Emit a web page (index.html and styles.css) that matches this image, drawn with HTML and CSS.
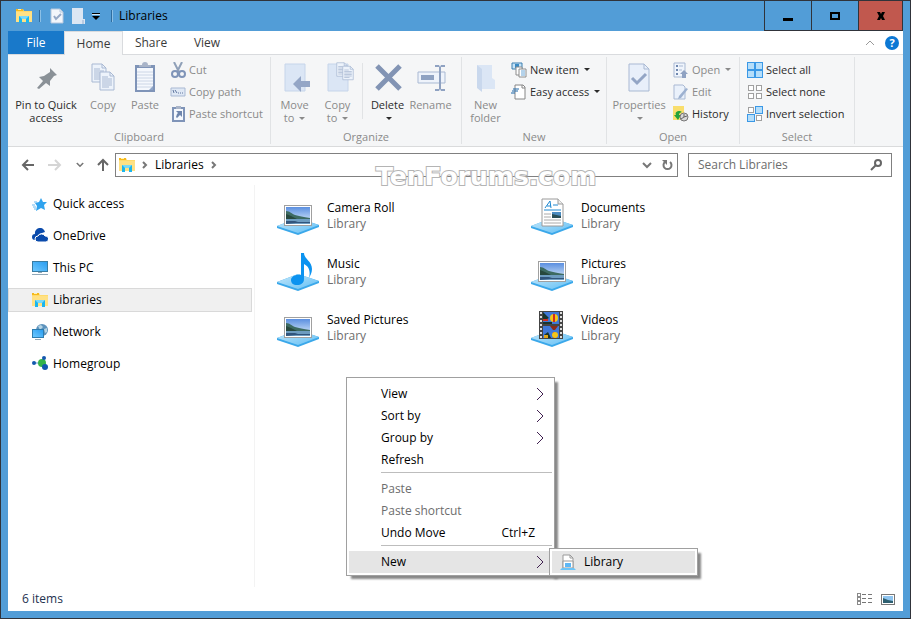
FILE: index.html
```html
<!DOCTYPE html>
<html lang="en">
<head>
    <meta charset="UTF-8">
    <meta name="viewport" content="width=device-width, initial-scale=1.0">
    <title>Libraries</title>
    <link rel="stylesheet" href="styles.css">
</head>
<body>
    <!-- shapes used more than once -->
    <svg class="defs" aria-hidden="true">
        <linearGradient id="baseFill" x1="0" y1="0" x2="1" y2="1">
            <stop offset="0" stop-color="#c5e8fa"/>
            <stop offset="1" stop-color="#62bff5"/>
        </linearGradient>
        <linearGradient id="screenFill" x1="0" y1="1" x2="1" y2="0">
            <stop offset="0" stop-color="#6cc8ff"/>
            <stop offset="1" stop-color="#2a9df0"/>
        </linearGradient>
        <linearGradient id="skyFill" x1="0" y1="0" x2="0" y2="1">
            <stop offset="0" stop-color="#5b8fe0"/>
            <stop offset="1" stop-color="#e4f3fc"/>
        </linearGradient>
        <symbol id="folder" viewBox="0 0 16 16">
            <path d="M0 1h7l1 2h8v11H0z" fill="#ffda6b"/>
            <path d="M0 1h7v2H0z" fill="#f6b91c"/>
            <path d="M2 1h3v1H2z" fill="#fff3b8"/>
            <path d="M0 4h16v10H0z" fill="#ffe184"/>
            <path d="M3 15V8h10v7h-3v-4H6v4z" fill="#1bb5ee"/>
            <path d="M3 8h10l-3 3H6z" fill="#7ad9f8"/>
        </symbol>
        <symbol id="base" viewBox="0 0 42 48">
            <path d="M0 38l21-8 21 7v2l-21 8-21-7z" fill="#3ba8ea"/>
            <path d="M0 38l21-8 21 7-21 8z" fill="url(#baseFill)"/>
        </symbol>
        <symbol id="photo" viewBox="0 0 28 21">
            <path d="M0 0h28v21H0z" fill="#a0a0a0"/>
            <path d="M1 1h26v19H1z" fill="#fff"/>
            <path d="M2 2h24v17H2z" fill="url(#skyFill)"/>
            <path d="M2 6c4 0 6 3 9 4 4 1 8 2 15 3v1H2z" fill="#3d6b62"/>
            <path d="M2 9l5 2 6 3H2z" fill="#27483d"/>
            <path d="M2 14h24v5H2z" fill="#6d9cc0"/>
            <path d="M2 16h9l3 1h12v1H12l-10 1z" fill="#31557c"/>
        </symbol>
        <symbol id="doc" viewBox="0 0 16 20">
            <path d="M1 1h10l4 4v14H1z" fill="#edf3fb" stroke="#a9b9d3"/>
            <path d="M11 1v4h4M3 6h6M3 8h10M3 10h10M3 12h10M3 14h10M3 16h7" fill="none" stroke="#a9b9d3"/>
        </symbol>
        <symbol id="submenu" viewBox="0 0 8 14">
            <path d="M1 1l6 6-6 6" fill="none" stroke="#402050"/>
        </symbol>
        <symbol id="chev" viewBox="0 0 6 8">
            <path d="M1 1l3 3-3 3" fill="none" stroke="#777" stroke-width="2"/>
        </symbol>
        <symbol id="down" viewBox="0 0 10 7">
            <path d="M1 1l4 4 4-4" fill="none" stroke="#777" stroke-width="2"/>
        </symbol>
    </svg>

    <div class="window">
        <header class="titlebar">
            <svg class="i16" viewBox="0 0 16 16"><use href="#folder"/></svg>
            <span class="divider"></span>
            <button class="quick" aria-label="Properties">
                <svg width="14" height="16" viewBox="0 0 14 16"><path d="M1 1h9l3 3v11H1z" fill="#f3f6fb" stroke="#b6c8de"/><path d="M10 1v3h3" fill="none" stroke="#b6c8de"/><path d="M4 8l2 3 5-5" fill="none" stroke="#96a9c6" stroke-width="2"/></svg>
            </button>
            <button class="quick" aria-label="New folder">
                <svg width="14" height="16" viewBox="0 0 14 16"><path d="M1 0h11v11h2v5H1z" fill="#dce6f3"/><path d="M11 12h2v4h-2z" fill="#b9cbe2"/></svg>
            </button>
            <button class="quick" aria-label="Customize Quick Access Toolbar">
                <svg width="8" height="7" viewBox="0 0 8 7"><path d="M0 0h8v1H0zM0 3h8L4 7z" fill="#000"/><path d="M0 1h8v1H0z" fill="#d4e7f6"/></svg>
            </button>
            <span class="divider"></span>
            <h1>Libraries</h1>
            <div class="caption">
                <button aria-label="Minimize"><svg width="12" height="12" viewBox="0 0 12 12"><path d="M1 8h10v3H1z"/></svg></button>
                <button aria-label="Maximize"><svg width="12" height="12" viewBox="0 0 12 12"><path d="M2 3h8v6H2z" fill="none" stroke="#000" stroke-width="2"/></svg></button>
                <button class="close" aria-label="Close"><svg width="12" height="12" viewBox="0 0 12 12"><path d="M2 2h3l1 2 1-2h3L8 6l2 4H7L6 8l-1 2H2l2-4z"/></svg></button>
            </div>
        </header>

        <div class="client">
            <nav class="tabs">
                <button class="tab file">File</button>
                <button class="tab home">Home</button>
                <button class="tab">Share</button>
                <button class="tab">View</button>
                <div class="tabs-right">
                    <button aria-label="Minimize the Ribbon"><svg width="10" height="6" viewBox="0 0 10 6"><path d="M1 5l4-4 4 4" fill="none" stroke="#9a9a9a"/></svg></button>
                    <button class="help" aria-label="Help">?</button>
                </div>
            </nav>

            <div class="ribbon">
                <section class="group clipboard">
                    <div class="tools">
                        <button class="big on wide">
                            <svg width="32" height="32" viewBox="0 0 32 32"><path d="M20 6l7 7-3 1-4 5v5l-4-3-7 6-2-1 6-7-4-4 5-1 6-4z" fill="#8a9197"/></svg>
                            <span>Pin to Quick access</span>
                        </button>
                        <button class="big narrow" disabled>
                            <svg width="32" height="32" viewBox="0 0 32 32"><use href="#doc" x="4" y="1" width="16" height="20"/><use href="#doc" x="12" y="9" width="16" height="20"/></svg>
                            <span>Copy</span>
                        </button>
                        <button class="big" disabled>
                            <svg width="32" height="32" viewBox="0 0 32 32"><path d="M6 3h20v27H6z" fill="#7f94b8"/><path d="M8 6h16v22H8z" fill="#f5f8fd"/><path d="M10 5h12V3h-3a3 3 0 0 0-6 0h-3z" fill="#a9b4c8"/><path d="M8 10h16M8 13h16M8 16h16M8 19h16M8 22h16M8 25h16" stroke="#ccd6e6"/><path d="M20 28l4-4v4z" fill="#8fa5c8"/></svg>
                            <span>Paste</span>
                        </button>
                        <div class="smalls">
                            <button class="small" disabled>
                                <svg class="i16" viewBox="0 0 16 16"><path d="M4 0l5 10M12 0L7 10" fill="none" stroke="#8fa0b8" stroke-width="2"/><circle cx="5" cy="12" r="3" fill="none" stroke="#7f94b8" stroke-width="2"/><circle cx="12" cy="12" r="3" fill="none" stroke="#7f94b8" stroke-width="2"/></svg>
                                Cut
                            </button>
                            <button class="small" disabled>
                                <svg class="i16" viewBox="0 0 16 16"><path d="M1 4h14v8H1z" fill="#dfe8f5" stroke="#a9b9d3"/><path d="M3 6l1 3M5 6l2 3M8 9h1M10 9h1M12 9h1" fill="none" stroke="#60779f"/></svg>
                                Copy path
                            </button>
                            <button class="small" disabled>
                                <svg class="i16" viewBox="0 0 16 16"><path d="M2 1h13v15H2z" fill="#7f94b8"/><path d="M4 3h9v11H4z" fill="#f5f8fd"/><path d="M6 0h5v3H6z" fill="#a9b4c8"/><path d="M6 5h6v6l-2-2-3 3-1-1 1-3 1-1z" fill="#6f86ad"/></svg>
                                Paste shortcut
                            </button>
                        </div>
                    </div>
                    <h2>Clipboard</h2>
                </section>

                <section class="group organize">
                    <div class="tools">
                        <button class="big" disabled>
                            <svg width="32" height="32" viewBox="0 0 32 32"><path d="M6 2h20v27H6z" fill="#dbe6f5" stroke="#c6d5ea"/><path d="M14 22l8-8v5h9v6h-9v5z" fill="#94a6c6"/></svg>
                            <span>Move<br>to <i class="caret"></i></span>
                        </button>
                        <button class="big" disabled>
                            <svg width="32" height="32" viewBox="0 0 32 32"><path d="M6 2h20v27H6z" fill="#dbe6f5" stroke="#c6d5ea"/><use href="#doc" x="14" y="0" width="12" height="15"/><use href="#doc" x="20" y="3" width="12" height="16"/></svg>
                            <span>Copy<br>to <i class="caret"></i></span>
                        </button>
                        <span class="line"></span>
                        <button class="big on">
                            <svg width="32" height="32" viewBox="0 0 32 32"><path d="M5 4l23 23M28 4L5 27" stroke="#8294b4" stroke-width="5"/></svg>
                            <span>Delete<br><i class="caret"></i></span>
                        </button>
                        <button class="big" disabled>
                            <svg width="32" height="32" viewBox="0 0 32 32"><path d="M3 10h27v11H3z" fill="#eef3fb" stroke="#a9b9d3"/><path d="M6 13h13v5H6z" fill="#8fa2c2"/><path d="M20 3h4l1 2 1-2h4v2h-4v22h4v2h-4l-1-2-1 2h-4v-2h4V5h-4z" fill="#8fa2c2"/></svg>
                            <span>Rename</span>
                        </button>
                    </div>
                    <h2>Organize</h2>
                </section>

                <section class="group new">
                    <div class="tools">
                        <button class="big" disabled>
                            <svg width="32" height="32" viewBox="0 0 32 32"><path d="M7 3h15v13l3 2v9H10z" fill="#dbe6f5"/><path d="M7 3l5 4v23l-5-4z" fill="#c9d8ed"/></svg>
                            <span>New folder</span>
                        </button>
                        <div class="smalls">
                            <button class="small on">
                                <svg class="i16" viewBox="0 0 16 16"><path d="M1 1h10v6H1z" fill="#c8e4f8" stroke="#3a7fb0"/><path d="M4 2h4v4H4z" fill="#3a8ac4"/><path d="M5 5h6v8H5z" fill="#fff" stroke="#8c8c8c"/><path d="M8 7h7v8H8z" fill="#fff" stroke="#8c8c8c"/><path d="M10 9h4M10 11h4M10 13h4" stroke="#6aa6d6"/></svg>
                                New item <i class="caret"></i>
                            </button>
                            <button class="small on">
                                <svg class="i16" viewBox="0 0 16 16"><path d="M4 1h8l2 2v12H4z" fill="#fff" stroke="#868686"/><path d="M11 1v3h3" fill="none" stroke="#868686"/><path d="M2 5h6M1 7h6M0 9h4" stroke="#1c66a8"/></svg>
                                Easy access <i class="caret"></i>
                            </button>
                        </div>
                    </div>
                    <h2>New</h2>
                </section>

                <section class="group open">
                    <div class="tools">
                        <button class="big wide" disabled>
                            <svg width="32" height="32" viewBox="0 0 32 32"><path d="M6 2h15l5 5v22H6z" fill="#e8effa" stroke="#a9b9d3"/><path d="M21 2v5h5" fill="none" stroke="#a9b9d3"/><path d="M9 16l5 5 9-9" fill="none" stroke="#93a5c5" stroke-width="3"/></svg>
                            <span>Properties<br><i class="caret"></i></span>
                        </button>
                        <div class="smalls">
                            <button class="small" disabled>
                                <svg class="i16" viewBox="0 0 16 16"><path d="M1 1h11v14H1z" fill="#f0f5fc" stroke="#a9b9d3"/><path d="M3 3h2v2H3zM3 7h2v2H3zM3 11h2v2H3z" fill="#7088b0"/><path d="M6 4h4M6 8h3" stroke="#a9b9d3"/><path d="M11 8l4 4h-2v4h-4v-4H7z" fill="#8fa2c2"/></svg>
                                Open <i class="caret"></i>
                            </button>
                            <button class="small" disabled>
                                <svg class="i16" viewBox="0 0 16 16"><path d="M1 1h9l2 2v12H1z" fill="#eaf1fb" stroke="#a9b9d3"/><path d="M13 4l2 1-7 9-3 1 1-3z" fill="#9db1d0"/></svg>
                                Edit
                            </button>
                            <button class="small on">
                                <svg class="i16" viewBox="0 0 16 16"><path d="M0 0h11v14H0z" fill="#f9de6c"/><path d="M7 5C3 5 2 7 3 9L1 9l4 5 3-5H6c0-2 1-2 3-3z" fill="#26a33a"/><circle cx="11" cy="11" r="4" fill="#d8d8d8" stroke="#777"/><path d="M11 8v3l3-1M8 13l3-2" fill="none" stroke="#666"/></svg>
                                History
                            </button>
                        </div>
                    </div>
                    <h2>Open</h2>
                </section>

                <section class="group select">
                    <div class="tools">
                        <div class="smalls">
                            <button class="small on">
                                <svg class="i16" viewBox="0 0 16 16"><path d="M0 0h16v16H0z" fill="#3a98e6"/><path d="M1 1h6v6H1zM9 1h6v6H9zM1 9h6v6H1zM9 9h6v6H9z" fill="#b5defa"/></svg>
                                Select all
                            </button>
                            <button class="small on">
                                <svg class="i16" viewBox="0 0 16 16"><path d="M1 1h6v6H1zM9 1h6v6H9zM1 9h6v6H1zM9 9h6v6H9z" fill="#a0a0a0"/><path d="M2 2h4v4H2zM10 2h4v4h-4zM2 10h4v4H2zM10 10h4v4h-4z" fill="#fff"/></svg>
                                Select none
                            </button>
                            <button class="small on">
                                <svg class="i16" viewBox="0 0 16 16"><path d="M1 1h6v6H1zM9 9h6v6H9z" fill="#a0a0a0"/><path d="M2 2h4v4H2zM10 10h4v4h-4z" fill="#fff"/><path d="M8 0h8v8H8zM0 8h8v8H0z" fill="#3a98e6"/><path d="M9 1h6v6H9zM1 9h6v6H1z" fill="#b5defa"/></svg>
                                Invert selection
                            </button>
                        </div>
                    </div>
                    <h2>Select</h2>
                </section>
            </div>

            <div class="navbar">
                <div class="arrows">
                    <button aria-label="Back"><svg width="14" height="12" viewBox="0 0 14 12"><path d="M13 6H2M7 1L2 6l5 5" fill="none" stroke="#666" stroke-width="2"/></svg></button>
                    <button aria-label="Forward" disabled><svg width="14" height="12" viewBox="0 0 14 12"><path d="M0 6h11M7 1l5 5-5 5" fill="none" stroke="#d5d5d5" stroke-width="2"/></svg></button>
                    <button aria-label="Recent locations"><svg width="8" height="6" viewBox="0 0 10 7"><use href="#down"/></svg></button>
                    <button aria-label="Up"><svg width="12" height="14" viewBox="0 0 12 14"><path d="M6 13V2M1 7l5-5 5 5" fill="none" stroke="#666" stroke-width="2"/></svg></button>
                </div>
                <div class="address">
                    <svg class="i16" viewBox="0 0 16 16"><use href="#folder"/></svg>
                    <svg width="6" height="8"><use href="#chev"/></svg>
                    <a href="#">Libraries</a>
                    <svg width="6" height="8"><use href="#chev"/></svg>
                    <div class="address-end">
                        <button aria-label="Previous locations"><svg width="10" height="7"><use href="#down"/></svg></button>
                        <button aria-label="Refresh"><svg width="12" height="12" viewBox="0 0 12 12"><path d="M9 3a4 4 0 1 1-5 0" fill="none" stroke="#777" stroke-width="2"/><path d="M1 1h5v5z" fill="#777"/></svg></button>
                    </div>
                    <span class="watermark">TenForums.com</span>
                </div>
                <form class="search">
                    <input type="search" placeholder="Search Libraries" aria-label="Search Libraries">
                    <svg width="12" height="12" viewBox="0 0 12 12"><circle cx="8" cy="4" r="3" fill="none" stroke="#666" stroke-width="2"/><path d="M1 11l5-5" stroke="#666" stroke-width="2"/></svg>
                </form>
            </div>

            <div class="content">
                <nav class="sidebar">
                    <a href="#"><svg class="i16" viewBox="0 0 16 16"><path d="M9 2l2 4h4l-3 3 1 5-4-2-5 3 1-5-2-3 4-1z" fill="#30a3ee"/><path d="M2 6h3M0 9h3M1 11h3M2 13h2" stroke="#6cb9ef"/></svg>Quick access</a>
                    <a href="#"><svg class="i16" viewBox="0 0 16 16"><path d="M3 12a3 3 0 0 1 0-6 5 5 0 0 1 10-2L7 6z" fill="#0a4aab"/><path d="M6 14a3 3 0 0 1 0-6 4 4 0 0 1 7 0 3 3 0 0 1 1 6z" fill="#0a4aab" stroke="#fff"/></svg>OneDrive</a>
                    <a href="#"><svg class="i16" viewBox="0 0 16 16"><path d="M0 1h16v11H0z" fill="#397da3"/><path d="M1 2h14v9H1z" fill="url(#screenFill)"/><path d="M6 12h4v1H6zM0 14h16v1H0z" fill="#91a8b8"/></svg>This PC</a>
                    <a href="#" class="current"><svg class="i16" viewBox="0 0 16 16"><use href="#folder"/></svg>Libraries</a>
                    <a href="#"><svg class="i16" viewBox="0 0 16 16"><circle cx="10" cy="6" r="6" fill="#5d93bd"/><path d="M6 2l3-1 2 2-3 3zM12 5l3-1v4l-2 1z" fill="#b5d4e4"/><path d="M0 5h12v9H0z" fill="#2d7caf"/><path d="M1 6h10v7H1z" fill="url(#screenFill)"/><path d="M3 15h6v1H3z" fill="#91a8b8"/></svg>Network</a>
                    <a href="#"><svg class="i16" viewBox="0 0 16 16"><path d="M3 7h8l1-5M10 7l3 4" fill="none" stroke="#579bc8"/><circle cx="10" cy="7" r="4" fill="#35b44a"/><circle cx="2" cy="7" r="2" fill="#1358ae"/><circle cx="12" cy="2" r="2" fill="#1358ae"/><circle cx="13" cy="11" r="3" fill="#1358ae"/></svg>Homegroup</a>
                </nav>

                <main class="files">
                    <a href="#" class="item">
                        <svg width="42" height="48" viewBox="0 0 42 48"><use href="#base"/><use href="#photo" x="7" y="17" width="28" height="21"/></svg>
                        <span>Camera Roll<small>Library</small></span>
                    </a>
                    <a href="#" class="item">
                        <svg width="42" height="48" viewBox="0 0 42 48"><use href="#base"/><path d="M11 11h16l5 5v22H11z" fill="#fff" stroke="#9a9a9a"/><path d="M27 11v5h5" fill="#eee" stroke="#9a9a9a"/><path d="M14 20l5-7 1 7M16 18h4M22 17h5M13 22h17" fill="none" stroke="#1e88d0"/><path d="M13 26h7M13 29h7M13 32h17M13 35h17" stroke="#aaa"/><path d="M21 24h9v6h-9z" fill="#4b8bc0"/><path d="M21 26l9 2v2h-9z" fill="#294e55"/></svg>
                        <span>Documents<small>Library</small></span>
                    </a>
                    <a href="#" class="item">
                        <svg width="42" height="48" viewBox="0 0 42 48"><use href="#base"/><path d="M24 9h3c0 6 8 8 8 16 0 4-2 7-3 9 2-8-1-12-5-14v15c0 4-3 6-7 6s-6-2-6-5 4-6 10-5z" fill="#0c93f0"/></svg>
                        <span>Music<small>Library</small></span>
                    </a>
                    <a href="#" class="item">
                        <svg width="42" height="48" viewBox="0 0 42 48"><use href="#base"/><use href="#photo" x="7" y="17" width="28" height="21"/></svg>
                        <span>Pictures<small>Library</small></span>
                    </a>
                    <a href="#" class="item">
                        <svg width="42" height="48" viewBox="0 0 42 48"><use href="#base"/><use href="#photo" x="7" y="17" width="28" height="21"/></svg>
                        <span>Saved Pictures<small>Library</small></span>
                    </a>
                    <a href="#" class="item">
                        <svg width="42" height="48" viewBox="0 0 42 48"><use href="#base"/><path d="M8 11h24v28H8z" fill="#444"/><path d="M10 12v27M30 12v27" stroke="#ddd" stroke-width="2" stroke-dasharray="2 2"/><path d="M12 12h16v12H12zM12 26h16v12H12z" fill="#3f78d8"/><path d="M12 12l6 6-6 3zM12 22h9v2h-9zM13 35l4-3 3 6h-7z" fill="#19352c"/><circle cx="23" cy="18" r="4" fill="#f5c518"/><path d="M22 14h2v8h-2zM12 19h5v2h-5zM22 32h2v6h-2z" fill="#d22d20"/><path d="M19 26h8l-3 4h-2z" fill="#8a2a18"/><circle cx="24" cy="35" r="3" fill="#f5c518"/><path d="M13 35h4v3h-4z" fill="#e0a516"/></svg>
                        <span>Videos<small>Library</small></span>
                    </a>
                </main>
            </div>

            <footer class="status">
                <span>6 items</span>
                <div class="views">
                    <button aria-label="Details"><svg width="16" height="12" viewBox="0 0 16 12"><path d="M0 0h4v12H0z" fill="#8a8a8a"/><path d="M1 1h2v2H1zM1 5h2v2H1zM1 9h2v2H1z" fill="#fff"/><path d="M5 1h4v1H5zM5 5h4v1H5zM5 9h4v1H5zM11 1h4v1h-4zM11 5h4v1h-4zM11 9h4v1h-4z" fill="#777"/></svg></button>
                    <button aria-label="Large icons"><svg width="14" height="11" viewBox="0 0 14 11"><path d="M0 0h14v11H0z" fill="#777"/><path d="M1 1h12v9H1z" fill="#fff"/><path d="M2 2h10v7H2z" fill="#8fc5f0"/><path d="M2 4l5 2 5 1v2H2z" fill="#2d5f70"/></svg></button>
                </div>
            </footer>
        </div>
    </div>

    <div class="menu context">
        <button>View <svg width="8" height="14"><use href="#submenu"/></svg></button>
        <button>Sort by <svg width="8" height="14"><use href="#submenu"/></svg></button>
        <button>Group by <svg width="8" height="14"><use href="#submenu"/></svg></button>
        <button>Refresh</button>
        <hr>
        <button disabled>Paste</button>
        <button disabled>Paste shortcut</button>
        <button>Undo Move <kbd>Ctrl+Z</kbd></button>
        <hr>
        <button class="active">New <svg width="8" height="14"><use href="#submenu"/></svg></button>
    </div>
    <div class="menu sub">
        <button class="active"><svg class="i16" viewBox="0 0 16 16"><path d="M3 1h7l3 3v10H3z" fill="#fff" stroke="#999"/><path d="M10 1v3h3" fill="none" stroke="#999"/><path d="M3 7h10v7H3z" fill="#fff" stroke="#999"/><path d="M5 9h6v4H5z" fill="#5db7f5"/><path d="M2 14h12l2 2H0z" fill="#6cc4f7"/></svg>Library</button>
    </div>
</body>
</html>
```

FILE: styles.css
```css
* {
    box-sizing: border-box;
}

body {
    margin: 0;
    font-family: "Open Sans", "Noto Sans", sans-serif;
    font-size: 12px;
    line-height: 16px;
    color: #000;
}

button {
    margin: 0;
    padding: 0;
    border: 0;
    background: none;
    font: inherit;
    color: inherit;
}

a {
    color: inherit;
    text-decoration: none;
}

h1, h2 {
    margin: 0;
    font-size: 12px;
    font-weight: normal;
}

svg {
    display: block;
    flex: none;
}

.defs {
    position: absolute;
    width: 0;
    height: 0;
}

.i16 {
    width: 16px;
    height: 16px;
}

.window {
    display: flex;
    flex-direction: column;
    min-height: 100vh;
    padding: 0 7px 7px;
    border: 1px solid #30333a;
    background: #529dd7;
}

/* title bar */
.titlebar {
    display: flex;
    align-items: center;
    height: 30px;
    padding-left: 8px;
}

.divider {
    width: 1px;
    height: 12px;
    margin: 0 7px;
    background: #2f6d9f;
    box-shadow: 1px 0 #8cc0e6;
}

.quick {
    margin: 0 4px 0 3px;
}

.titlebar h1 {
    flex: 1;
}

.caption {
    display: flex;
    align-self: stretch;
}

.caption button {
    display: flex;
    align-items: center;
    justify-content: center;
    width: 47px;
    border: 1px solid #30333a;
    border-width: 0 0 1px 1px;
}

.caption .close {
    width: 45px;
    border-right-width: 1px;
    background: #c1584e;
}

.client {
    flex: 1;
    display: flex;
    flex-direction: column;
    background: #fff;
}

/* tabs and ribbon */
.tabs {
    display: flex;
    height: 24px;
    border-bottom: 1px solid #d9dbde;
    color: #3a3a3a;
}

.tab {
    width: 56px;
}

.tab.file {
    background: #1979ca;
    color: #fff;
}

.tab.home {
    width: 59px;
    height: 24px;
    border: 1px solid #d9dbde;
    border-width: 1px 1px 0;
    background: #f5f6f7;
}

.tabs-right {
    display: flex;
    align-items: center;
    gap: 10px;
    margin-left: auto;
    padding-right: 4px;
}

.help {
    width: 14px;
    height: 14px;
    border-radius: 50%;
    background: #0c78d4;
    color: #fff;
    font-size: 11px;
    font-weight: bold;
    line-height: 14px;
}

.ribbon {
    display: flex;
    height: 92px;
    padding: 2px 0;
    border-bottom: 1px solid #dadbdc;
    background: #f5f6f7;
    font-size: 11px;
    color: #8a8a8a;
}

.group {
    display: flex;
    flex-direction: column;
    justify-content: space-between;
    padding: 2px 2px 0;
    border-right: 1px solid #e1e3e5;
}

.clipboard { width: 263px; }
.organize { width: 191px; }
.new { width: 145px; }
.open { width: 133px; }
.select { width: 115px; }

.group h2 {
    font-size: 11px;
    line-height: 14px;
    text-align: center;
}

.tools {
    display: flex;
}

.big {
    display: flex;
    flex-direction: column;
    align-items: center;
    width: 43px;
    padding-top: 3px;
    line-height: 13px;
    white-space: nowrap;
}

.big span {
    margin-top: 4px;
}

.big.wide {
    width: 60px;
}

.clipboard .big {
    width: 42px;
}

.clipboard .wide {
    width: 72px;
    white-space: normal;
}

.new .big {
    white-space: normal;
}

.on {
    color: #2b2b2b;
}

.line {
    width: 1px;
    height: 56px;
    margin: 4px 3px 0;
    background: #e1e3e5;
}

.smalls {
    padding-left: 4px;
}

.select .smalls {
    padding-left: 5px;
}

.small {
    display: flex;
    align-items: center;
    gap: 3px;
    height: 22px;
    white-space: nowrap;
}

.caret {
    display: inline-block;
    margin: 0 0 2px 2px;
    border: 3px solid transparent;
    border-top-color: currentColor;
    border-bottom: 0;
}

/* address row */
.navbar {
    display: flex;
    padding: 6px 11px 8px 13px;
}

.arrows {
    display: flex;
    align-items: center;
    justify-content: space-between;
    width: 88px;
    margin-right: 6px;
}

.address {
    position: relative;
    flex: 1;
    display: flex;
    align-items: center;
    height: 24px;
    padding: 0 4px 0 3px;
    gap: 7px;
    border: 1px solid #808080;
}

.address-end {
    display: flex;
    align-items: center;
    gap: 9px;
    margin-left: auto;
}

.watermark {
    position: absolute;
    top: 9px;
    left: 260px;
    font-family: "DejaVu Sans", sans-serif;
    font-size: 25px;
    font-weight: bold;
    line-height: 28px;
    color: #fff;
    -webkit-text-stroke: 2px #b4b4b4;
    paint-order: stroke fill;
}

.search {
    display: flex;
    align-items: center;
    width: 204px;
    height: 24px;
    margin-left: 10px;
    padding: 0 9px;
    border: 1px solid #808080;
}

.search input {
    flex: 1;
    min-width: 0;
    padding: 0;
    border: 0;
    outline: 0;
    font: inherit;
}

.search input::placeholder {
    color: #6d6d6d;
}

/* panes */
.content {
    flex: 1;
    display: flex;
}

.sidebar {
    display: flex;
    flex-direction: column;
    gap: 8px;
    width: 247px;
    padding: 7px 2px 0 0;
    border-right: 1px solid #f3f3f3;
}

.sidebar a {
    display: flex;
    align-items: center;
    gap: 5px;
    height: 24px;
    padding-left: 23px;
    border: 1px solid transparent;
}

.sidebar .current {
    border-color: #d9d9d9;
    background: #f0f0f0;
}

.files {
    display: grid;
    grid-template-columns: 254px 254px;
    grid-auto-rows: 56px;
    align-content: start;
    padding: 3px 0 0 22px;
}

.item {
    display: flex;
    gap: 8px;
}

.item span {
    padding-top: 12px;
}

.item small {
    display: block;
    font-size: 12px;
    color: #6d6d6d;
}

.status {
    display: flex;
    align-items: center;
    justify-content: space-between;
    height: 24px;
    padding: 0 8px 0 14px;
    color: #1e3250;
}

.views {
    display: flex;
    align-items: center;
    gap: 8px;
}

/* menus */
.menu {
    position: absolute;
    padding: 5px 2px 2px;
    border: 1px solid #a0a0a0;
    background: #fff;
    box-shadow: 4px 4px 2px -1px #888;
}

.context {
    top: 377px;
    left: 346px;
    width: 209px;
}

.sub {
    top: 548px;
    left: 549px;
    width: 149px;
    padding: 2px;
}

.menu button {
    display: flex;
    align-items: center;
    justify-content: space-between;
    width: 100%;
    height: 22px;
    padding: 0 8px 0 32px;
}

.menu button:disabled {
    color: #6d6d6d;
}

.menu .active {
    background: #e5e5e5;
}

.sub button {
    justify-content: start;
    gap: 8px;
    padding-left: 8px;
}

.menu kbd {
    margin-right: 9px;
    font: inherit;
}

.menu hr {
    height: 1px;
    margin: 1px 0 5px 32px;
    border: 0;
    background: #bdbdbd;
}
```
